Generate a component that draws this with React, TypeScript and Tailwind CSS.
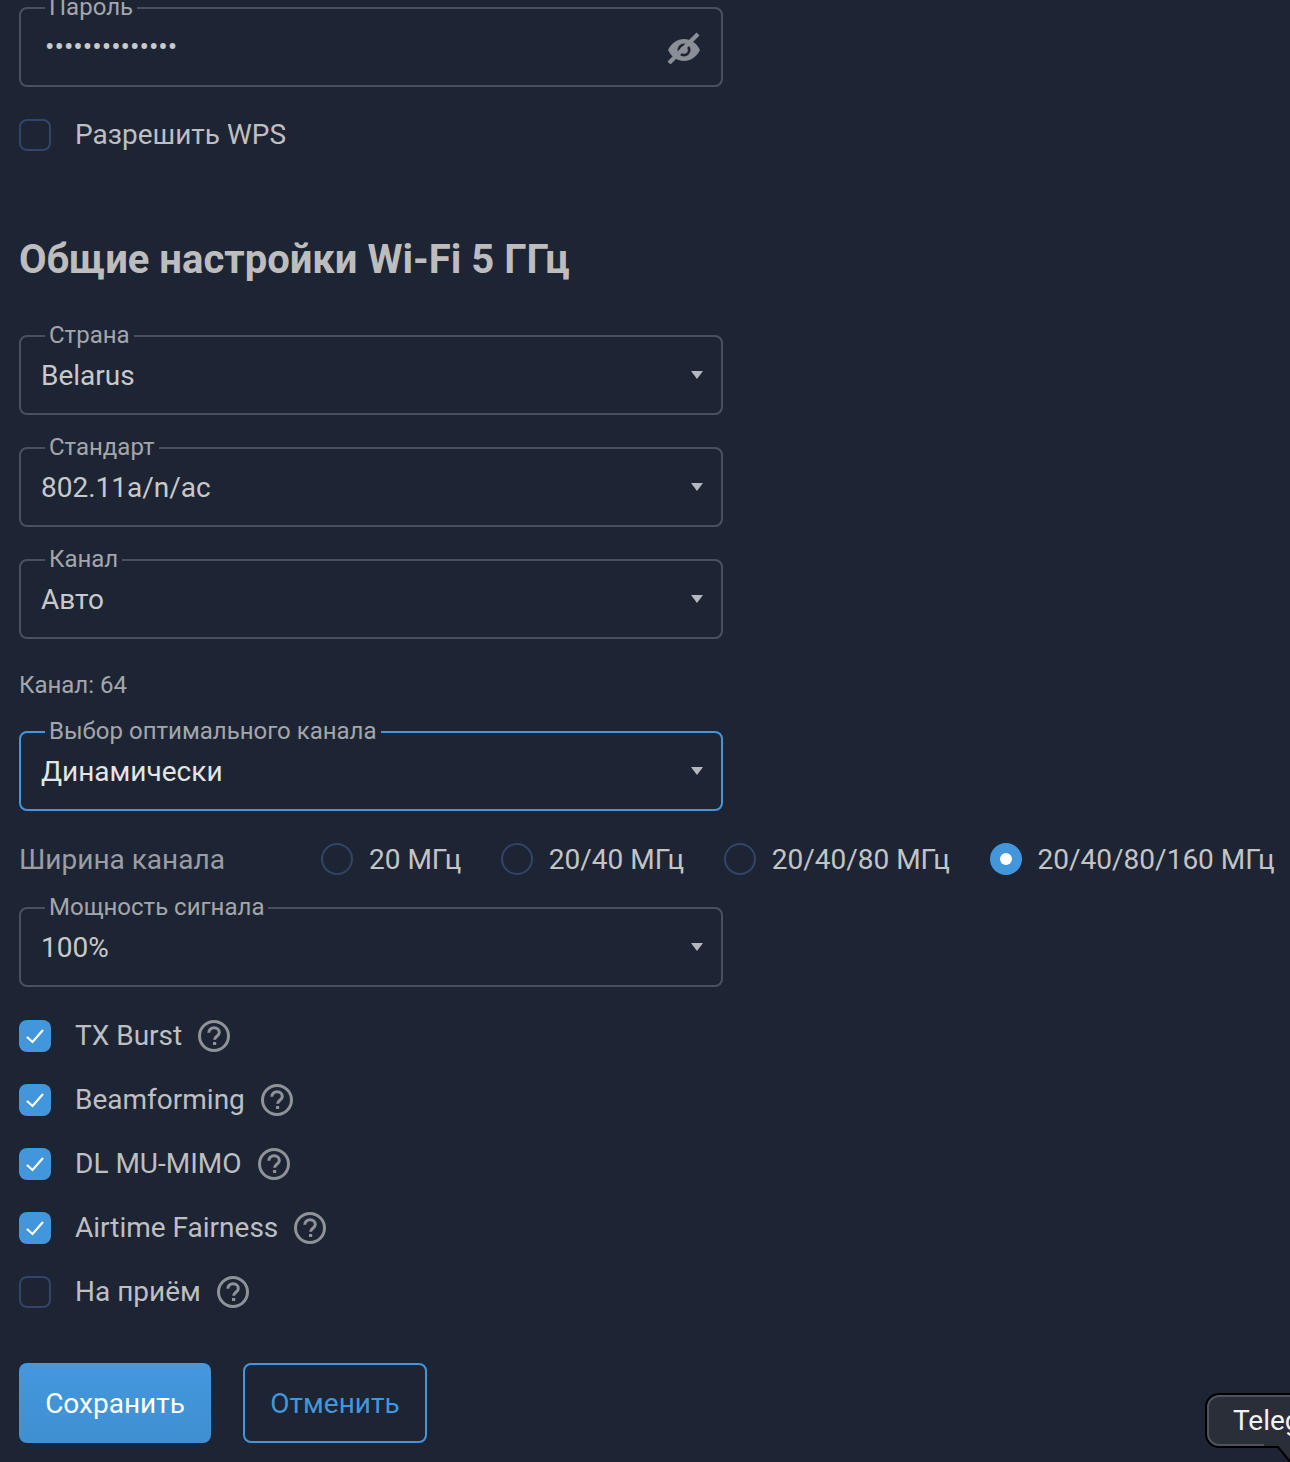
import React from 'react';

// ------------------------------------------------------------------
// Small drawings
// ------------------------------------------------------------------

function CaretDown() {
  return (
    <svg width="12" height="8" viewBox="0 0 12 8" className="shrink-0">
      <path d="M0 0h12L6 8z" fill="#b4b7bb" />
    </svg>
  );
}

function EyeOff() {
  return (
    <svg width="34" height="34" viewBox="0 0 34 34" className="mr-[2px] shrink-0">
      <path
        d="M1 20C5 12.500 10.500 9 17 9s12 3.500 16 11c-4 7.500-9.500 11-16 11S5 27.500 1 20z"
        fill="#8a8f96"
      />
      <circle cx="17" cy="20" r="6.500" fill="#1d2535" />
      <circle cx="17" cy="20" r="3.800" fill="#8a8f96" />
      <path d="M2 33 31 4" stroke="#8a8f96" strokeWidth="4.200" />
    </svg>
  );
}

function HelpIcon() {
  return (
    <svg width="32" height="32" viewBox="0 0 32 32" className="shrink-0">
      <circle cx="16" cy="16" r="14.500" fill="none" stroke="#8f9397" strokeWidth="3" />
      <path
        d="M10.800 12.800c0-3 2.300-5.100 5.300-5.100s5.200 1.900 5.200 4.700c0 3.800-4.700 3.800-4.700 7.400"
        fill="none"
        stroke="#8f9397"
        strokeWidth="3"
      />
      <rect x="15" y="22" width="3.200" height="3" fill="#8f9397" />
    </svg>
  );
}

// ------------------------------------------------------------------
// Form controls
// ------------------------------------------------------------------

interface OutlinedFieldProps {
  label: string;
  focused?: boolean;
  children: React.ReactNode;
}

function OutlinedField({ label, focused = false, children }: OutlinedFieldProps) {
  return (
    <div
      className={`relative flex h-20 w-[704px] items-center justify-between rounded-lg border-2 pl-5 pr-[18px] ${
        focused ? 'border-[#4296db]' : 'border-[#4a505e]'
      }`}
    >
      <span className="absolute left-[24px] top-[-15px] bg-[#1d2535] px-1 text-[24px] leading-[26px] text-[#a4a6ab]">
        {label}
      </span>
      {children}
    </div>
  );
}

function SelectField({ label, value, focused }: { label: string; value: string; focused?: boolean }) {
  return (
    <OutlinedField label={label} focused={focused}>
      <span className={`pt-0.5 text-[28px] leading-8 ${focused ? 'text-[#e4e4e4]' : 'text-[#c9c9c9]'}`}>{value}</span>
      <CaretDown />
    </OutlinedField>
  );
}

function CheckBox({ checked = false }: { checked?: boolean }) {
  if (!checked) {
    return <span className="h-8 w-8 shrink-0 rounded-lg border-2 border-[#334468]" />;
  }
  return (
    <span className="flex h-8 w-8 shrink-0 items-center justify-center rounded-lg bg-[#4296db]">
      <svg width="20" height="16" viewBox="0 0 20 16">
        <path d="M2 9l5.500 5L18 2" fill="none" stroke="#ffffff" strokeWidth="2.200" />
      </svg>
    </span>
  );
}

function CheckRow({ label, checked, help = true }: { label: string; checked?: boolean; help?: boolean }) {
  return (
    <div className="flex h-8 items-center">
      <CheckBox checked={checked} />
      <span className="ml-6 text-[28px] leading-8 text-[#bfbfc1]">{label}</span>
      {help && (
        <span className="ml-4">
          <HelpIcon />
        </span>
      )}
    </div>
  );
}

function Radio({ label, checked = false }: { label: string; checked?: boolean }) {
  return (
    <div className="flex items-center gap-4">
      {checked ? (
        <span className="flex h-8 w-8 items-center justify-center rounded-full bg-[#4296db]">
          <span className="h-3 w-3 rounded-full bg-white" />
        </span>
      ) : (
        <span className="h-8 w-8 rounded-full border-2 border-[#334468]" />
      )}
      <span className="whitespace-nowrap pt-0.5 text-[28px] leading-8 text-[#c4c4c4]">{label}</span>
    </div>
  );
}

// ------------------------------------------------------------------
// Page
// ------------------------------------------------------------------

export default function App() {
  return (
    <div className="relative h-[1462px] w-[1290px] overflow-hidden bg-[#1d2535] pl-[19px] pt-[7px] font-['Roboto',sans-serif]">
      <OutlinedField label="Пароль">
        <span className="pl-1 text-[28px] leading-8 text-[#c9c9c9]">••••••••••••••</span>
        <EyeOff />
      </OutlinedField>

      <div className="mt-8">
        <CheckRow label="Разрешить WPS" help={false} />
      </div>

      <h2 className="mt-[85px] text-[40px] font-bold leading-[48px] text-[#bdbdbd]">Общие настройки Wi-Fi 5 ГГц</h2>

      <div className="mt-[51px] flex flex-col gap-8">
        <SelectField label="Страна" value="Belarus" />
        <SelectField label="Стандарт" value="802.11a/n/ac" />
        <SelectField label="Канал" value="Авто" />
      </div>

      <p className="mt-8 text-[24px] leading-7 text-[#a4a6ab]">Канал: 64</p>

      <div className="mt-8">
        <SelectField label="Выбор оптимального канала" value="Динамически" focused />
      </div>

      <div className="mt-8 flex h-8 items-center">
        <span className="w-[302px] shrink-0 pt-0.5 text-[28px] leading-8 text-[#9b9da2]">Ширина канала</span>
        <div className="flex items-center gap-[39.6px]">
          <Radio label="20 МГц" />
          <Radio label="20/40 МГц" />
          <Radio label="20/40/80 МГц" />
          <Radio label="20/40/80/160 МГц" checked />
        </div>
      </div>

      <div className="mt-8">
        <SelectField label="Мощность сигнала" value="100%" />
      </div>

      <div className="mt-[33px] flex flex-col gap-8">
        <CheckRow label="TX Burst" checked />
        <CheckRow label="Beamforming" checked />
        <CheckRow label="DL MU-MIMO" checked />
        <CheckRow label="Airtime Fairness" checked />
        <CheckRow label="На приём" />
      </div>

      <div className="mt-[55px] flex gap-8">
        <button
          type="button"
          className="h-20 w-48 rounded-lg bg-gradient-to-b from-[#4498de] to-[#3f8fd2] pt-0.5 text-[28px] font-[450] text-white"
        >
          Сохранить
        </button>
        <button
          type="button"
          className="h-20 w-[184px] rounded-lg border-2 border-[#4296db] pt-0.5 text-[28px] font-[450] text-[#4296db]"
        >
          Отменить
        </button>
      </div>

      {/* Telegram tooltip, cut off by the right edge */}
      <div className="absolute left-[1207px] top-[1395px] flex h-[51px] w-[200px] items-center rounded-xl border-2 border-[#4f535c] bg-[#2a2e38] pl-[24px] text-[28px] text-[#f2f2f2] shadow-[0_0_0_2px_#000000]">
        Telegram
      </div>
      <svg width="30" height="20" viewBox="0 0 30 20" className="absolute left-[1264px] top-[1444px]">
        <path d="M0 2h14l14 18H30V0H0z" fill="#2a2e38" />
        <path d="M0 3h14l14 17" fill="none" stroke="#000000" strokeWidth="2" />
      </svg>
    </div>
  );
}
